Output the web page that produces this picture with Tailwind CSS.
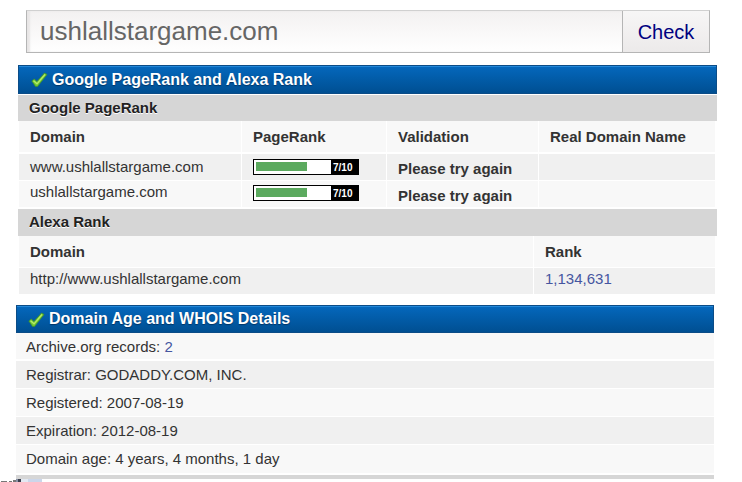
<!DOCTYPE html>
<html lang="en">
<head>
  <meta charset="UTF-8">
  <title>Domain check</title>
  <script src="https://cdn.jsdelivr.net/npm/@tailwindcss/browser@4"></script>
</head>
<body class="bg-white font-['Liberation_Sans',Arial,sans-serif] text-[15px] leading-5 text-[#333] overflow-hidden">

  <form class="flex h-[43px] mt-[10px] ml-[26px] mr-8 border border-[#b5b5b5] border-t-[#d0d0d0]">
    <input type="text" value="ushlallstargame.com" aria-label="Domain name"
      class="flex-1 min-w-0 px-[13px] text-[26px] text-[#666] bg-linear-to-b from-[#f3f1f1] to-white shadow-[inset_3px_0_2px_#e8e6e6] outline-none">
    <button type="button"
      class="w-[87px] border-l border-[#b5b5b5] bg-linear-to-b from-[#f7f6f6] to-[#eceaea] text-xl text-[#000080]">Check</button>
  </form>

  <section class="mt-3 ml-[18px] mr-[25px]">
    <h2 class="flex items-center h-[29px] pl-3 gap-1 border border-[#0b4c87] bg-linear-to-b from-[#0568bd] to-[#004f92] shadow-[inset_0_1px_0_#2488d8] text-base font-bold text-white text-shadow-[0_1px_1px_#003466]">
      <svg class="w-[17px] h-[17px]" viewBox="0 0 17 17">
        <path d="M.8 10 L3.2 8 L6 10.5 L13.5 2 L16 3.5 L6.5 15.5 L4.5 15.5 Z" fill="#6fc832" stroke="#3d9030" stroke-width=".8" stroke-linejoin="round"/>
        <path d="M2.5 9.7 L6 12.8 L14 3.5" fill="none" stroke="#b4e96a" stroke-width="1.3"/>
      </svg>
      Google PageRank and Alexa Rank
    </h2>

    <h3 class="mt-px h-[26px] pl-[11px] leading-[26px] font-bold text-[#222] text-shadow-[0_1px_0_#fff] bg-[#d6d6d6]">Google PageRank</h3>
    <div class="pl-px pr-0.5">
      <table class="w-full table-fixed border-separate border-spacing-0 text-left [&_th]:px-[11px] [&_td]:px-[11px] [&_td]:py-0 [&_td]:align-top">
        <colgroup>
          <col class="w-[222px]">
          <col class="w-[145px]">
          <col class="w-[152px]">
          <col>
        </colgroup>
        <thead>
          <tr class="h-[33px] bg-[#f8f8f8]">
            <th class="border-b-2 border-white">Domain</th>
            <th class="border-l border-b-2 border-white">PageRank</th>
            <th class="border-l border-b-2 border-white">Validation</th>
            <th class="border-l border-b-2 border-white">Real Domain Name</th>
          </tr>
        </thead>
        <tbody>
          <tr class="h-[27px] bg-[#f0f0f0]">
            <td class="border-b border-white"><div class="pt-[3px]">www.ushlallstargame.com</div></td>
            <td class="border-l border-b border-white">
              <div class="flex w-[106px] h-4 mt-[5px] border border-black bg-black">
                <div class="w-[77px] p-0.5 pb-[3px] bg-white"><div class="h-full bg-[#5caa5f]" style="width: 70%"></div></div>
                <span class="pl-0.5 text-[10px] leading-[15px] font-bold text-white">7/10</span>
              </div>
            </td>
            <td class="border-l border-b border-white font-bold"><div class="pt-[5px]">Please try again</div></td>
            <td class="border-l border-b border-white"></td>
          </tr>
          <tr class="h-[28px] bg-[#f8f8f8]">
            <td class="border-b-2 border-white"><div class="pt-px">ushlallstargame.com</div></td>
            <td class="border-l border-b-2 border-white">
              <div class="flex w-[106px] h-4 mt-1 border border-black bg-black">
                <div class="w-[77px] p-0.5 pb-[3px] bg-white"><div class="h-full bg-[#5caa5f]" style="width: 70%"></div></div>
                <span class="pl-0.5 text-[10px] leading-[15px] font-bold text-white">7/10</span>
              </div>
            </td>
            <td class="border-l border-b-2 border-white font-bold"><div class="pt-[5px]">Please try again</div></td>
            <td class="border-l border-b-2 border-white"></td>
          </tr>
        </tbody>
      </table>
    </div>

    <h3 class="h-[27px] pl-[11px] leading-[26px] font-bold text-[#222] text-shadow-[0_1px_0_#fff] bg-[#d6d6d6]">Alexa Rank</h3>
    <div class="pl-px pr-0.5">
      <table class="w-full table-fixed border-separate border-spacing-0 text-left [&_th]:px-[11px] [&_td]:px-[11px] [&_td]:pt-px [&_td]:align-top">
        <colgroup>
          <col class="w-[514px]">
          <col>
        </colgroup>
        <thead>
          <tr class="h-8 bg-[#f8f8f8]">
            <th class="border-b border-white">Domain</th>
            <th class="border-l border-b border-white">Rank</th>
          </tr>
        </thead>
        <tbody>
          <tr class="h-[26px] bg-[#f0f0f0]">
            <td>http://www.ushlallstargame.com</td>
            <td class="border-l border-white"><a href="#" class="text-[#4556a0]">1,134,631</a></td>
          </tr>
        </tbody>
      </table>
    </div>
  </section>

  <section class="mt-[11px] ml-4 mr-7">
    <h2 class="flex items-center h-7 pl-[11px] gap-1 border border-[#0b4c87] bg-linear-to-b from-[#0568bd] to-[#004f92] shadow-[inset_0_1px_0_#2488d8] text-base font-bold text-white text-shadow-[0_1px_1px_#003466]">
      <svg class="w-[17px] h-[17px]" viewBox="0 0 17 17">
        <path d="M.8 10 L3.2 8 L6 10.5 L13.5 2 L16 3.5 L6.5 15.5 L4.5 15.5 Z" fill="#6fc832" stroke="#3d9030" stroke-width=".8" stroke-linejoin="round"/>
        <path d="M2.5 9.7 L6 12.8 L14 3.5" fill="none" stroke="#b4e96a" stroke-width="1.3"/>
      </svg>
      Domain Age and WHOIS Details
    </h2>
    <ul class="[&>li]:px-[10px] [&>li]:border-white [&>li]:leading-[27px]">
      <li class="h-7 border-b-2 bg-[#f8f8f8]">Archive.org records: <a href="#" class="text-[#4556a0]">2</a></li>
      <li class="h-7 border-b bg-[#f0f0f0]">Registrar: GODADDY.COM, INC.</li>
      <li class="h-7 border-b bg-[#f8f8f8]">Registered: 2007-08-19</li>
      <li class="h-7 border-b bg-[#f0f0f0]">Expiration: 2012-08-19</li>
      <li class="h-[30px] border-b-2 bg-[#f8f8f8]">Domain age: 4 years, 4 months, 1 day</li>
    </ul>
    <div class="h-1 bg-[#d6d6d6]"></div>
  </section>

  <!-- top edge of the status strip -->
  <svg class="block w-[42px] h-[3px]" viewBox="0 0 42 3">
    <path d="M1 2h6v1H1zM9 2h3v1H9zM13 1h3v2h-3z" fill="#777"/>
    <path d="M16 0h2v3h-2z" fill="#8a93a8"/>
    <path d="M18 0h3v3h-3z" fill="#3a3f4c"/>
    <path d="M21 0h7v3h-7z" fill="#e3e9f2"/>
    <path d="M28 0h14v3H28z" fill="#cbd6ea"/>
  </svg>

</body>
</html>
